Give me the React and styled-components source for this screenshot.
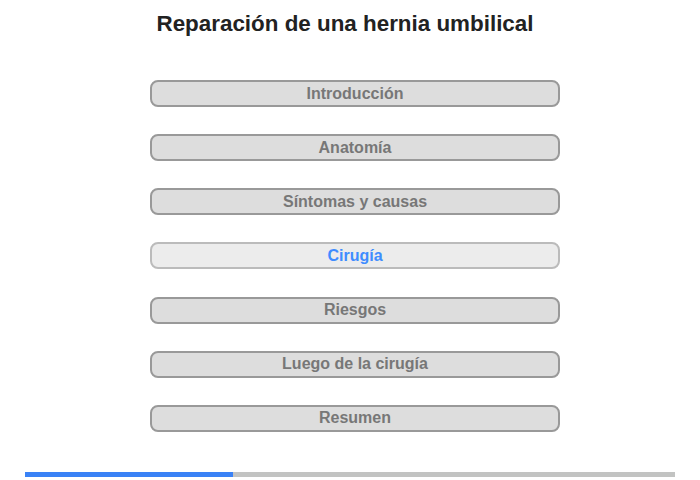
import styled, { createGlobalStyle } from "styled-components";

const GlobalStyle = createGlobalStyle`
  body {
    margin: 0;
    background: #fff;
    font-family: "Liberation Sans", Arial, sans-serif;
  }
`;

const Page = styled.div`
  width: 700px;
  height: 480px;
  display: flex;
  flex-direction: column;
`;

const Title = styled.h1`
  margin: 12px 0 0;
  text-align: center;
  font-size: 22.4px;
  font-weight: 700;
  line-height: 24px;
  color: #222;
  width: 690px;
`;

const Menu = styled.div`
  display: flex;
  flex-direction: column;
  gap: 27.17px;
  margin: 44px 0 0 150px;
  width: 410px;
`;

const Item = styled.div`
  height: 27px;
  box-sizing: border-box;
  border: 2px solid ${(p) => (p.$active ? "#bbb" : "#999")};
  border-radius: 8px;
  background: ${(p) => (p.$active ? "#ececec" : "#ddd")};
  color: ${(p) => (p.$active ? "#3f8cff" : "#777")};
  font-size: 16px;
  font-weight: 700;
  display: flex;
  align-items: center;
  justify-content: center;
`;

const Progress = styled.div`
  margin: auto 25px 3px;
  height: 5px;
  background: #c2c3c2;
  display: flex;
`;

const Fill = styled.div`
  background: #3a82f6;
  height: 100%;
`;

const sections = [
  "Introducción",
  "Anatomía",
  "Síntomas y causas",
  "Cirugía",
  "Riesgos",
  "Luego de la cirugía",
  "Resumen",
];

export default function App() {
  const active = 3;
  return (
    <Page>
      <GlobalStyle />
      <Title>Reparación de una hernia umbilical</Title>
      <Menu>
        {sections.map((s, i) => (
          <Item key={s} $active={i === active}>
            {s}
          </Item>
        ))}
      </Menu>
      <Progress>
        <Fill style={{ width: `${(208 / 650) * 100}%` }} />
      </Progress>
    </Page>
  );
}
